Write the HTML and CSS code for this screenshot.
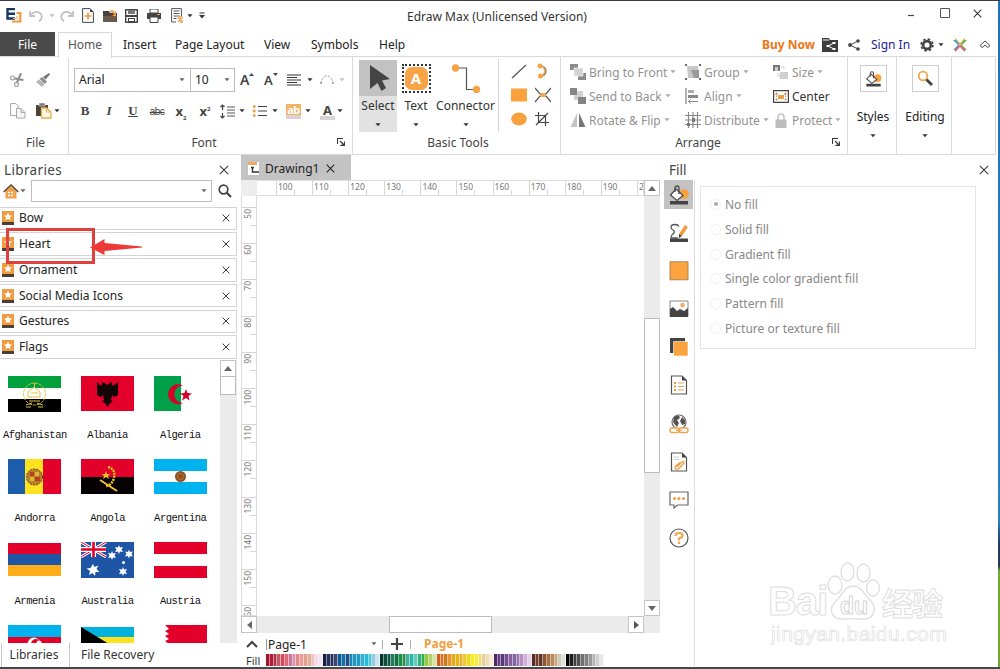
FILE: index.html
```html
<!DOCTYPE html>
<html lang="en">
<head>
<meta charset="utf-8">
<title>Edraw Max</title>
<link rel="stylesheet" href="styles.css">
</head>
<body>
<svg class="sprite" xmlns="http://www.w3.org/2000/svg">
  <symbol id="caret" viewBox="0 0 7 4"><path d="M.5 0h6l-3 3.5z" fill="currentColor"/></symbol>
  <symbol id="close" viewBox="0 0 10 10"><path d="M.8.8l8.4 8.4M9.2.8L.8 9.2" stroke="currentColor" stroke-width="1.2" fill="none"/></symbol>
  <symbol id="launcher" viewBox="0 0 8 8"><path d="M.5 6V.5H6M3 3l4 4M7.4 3.4v4h-4" stroke="#333" stroke-width="1.1" fill="none"/></symbol>
  <symbol id="lib" viewBox="0 0 12 14"><path fill="#f19a3e" d="M0 0h12v11H0z"/><path fill="#4a4038" d="M0 11h12v3H0z"/><path fill="#fff" d="M6 1.6l1.2 2.7 2.9.2-2.2 1.9.7 2.8L6 7.700 3.400 9.200l.7-2.800L1.900 4.500l2.900-.2z"/></symbol>
  <symbol id="undo" viewBox="0 0 14 14"><path d="M1 2v5h5M1.500 6.500C4 2.500 9 1.500 12 5c1.500 3 .5 5.500-2 7.500" stroke="#c2c2c2" stroke-width="1.800" fill="none"/></symbol>
  <symbol id="bucket" viewBox="0 0 20 20"><circle cx="15" cy="9" r="4.800" fill="#f8a13f"/><path d="M7 4l7 6.500-6 5-6.500-5.500z" fill="#fff" stroke="#4a4a4a" stroke-width="1.300"/><path d="M6 7V3q0-2 2-2t2 2v6" fill="none" stroke="#4a4a4a" stroke-width="1.300"/><path fill="#444" d="M1 16h18v3.500H1z"/></symbol>
</svg>

<div class="app">
  <header class="titlebar">
    <div class="qat">
      <svg width="16" height="15" viewBox="0 0 16 15"><path d="M9 1H1.500v9.500H9M2 5.700h7" stroke="#17375e" stroke-width="2.400" fill="none"/><path d="M10.500 5h3.800v8.500H6" stroke="#f0983a" stroke-width="2.200" fill="none"/><path d="M7 10.500h4V8" stroke="#f6b878" stroke-width="1.200" fill="none"/></svg>
      <svg width="14" height="14"><use href="#undo"/></svg>
      <svg class="caret pale" width="6" height="4"><use href="#caret"/></svg>
      <svg class="flip" width="14" height="14"><use href="#undo"/></svg>
      <svg width="12" height="15" viewBox="0 0 12 15"><path d="M.6.6H8l3.400 3.500v10.300H.6z" fill="#fff" stroke="#444"/><path d="M8 .6v3.500h3.400z" fill="#444"/><path d="M6 4.500v7M2.500 8h7" stroke="#f19a3e" stroke-width="1.700"/></svg>
      <svg width="14" height="14" viewBox="0 0 14 14"><path d="M0 2h6l1 2h7v9H0z" fill="#4a423c"/><path d="M0 7h14l-1 6H0z" fill="#6b5b4d"/><path d="M7 2c2-2 4-1 5 2V2h1v5H8l3-1c0-2-2-3-4-2z" fill="#f5a14b"/></svg>
      <svg width="13" height="14" viewBox="0 0 13 14"><path d="M.7.7h11.600v12.600H.7z" fill="#fff" stroke="#444" stroke-width="1.400"/><path d="M3 1h7v4H3z" fill="#777"/><path d="M1 6h11v2H1zM3 9h7v4H3z" fill="#444"/><path d="M4 10h5v2H4z" fill="#fff"/></svg>
      <svg width="14" height="14" viewBox="0 0 14 14"><path d="M3 0h8v4H3z" fill="#fff" stroke="#444"/><path d="M0 4h14v6H0z" fill="#444"/><path d="M3 8h8v5.500H3z" fill="#fff" stroke="#444"/><path d="M10 5h3v1h-3z" fill="#f19a3e"/></svg>
      <svg width="12" height="15" viewBox="0 0 12 15"><path d="M.6 14V.6h9.800v8M.6 14H5" fill="#fff" stroke="#555"/><path d="M2.500 3h6M2.500 5.500h6M2.500 8h6M2.500 10.500h3" stroke="#555"/><path d="M7 9l5 5M7 14l5-5M7 9h3M9 14h3" stroke="#f3a55a" stroke-width="1.500"/></svg>
      <svg class="caret" width="6" height="4"><use href="#caret"/></svg>
      <svg width="6" height="7" viewBox="0 0 6 7"><path d="M.5 1h5" stroke="#333"/><path d="M0 3h6L3 6.500z" fill="#333"/></svg>
    </div>
    <div class="title">Edraw Max (Unlicensed Version)</div>
    <div class="winbtns">
      <svg width="8" height="10" viewBox="0 0 8 10"><path d="M1 7.500h6" stroke="#444" stroke-width="1.200"/></svg>
      <svg width="10" height="10" viewBox="0 0 10 10"><path d="M.5.5h9v9h-9z" stroke="#555" fill="none"/></svg>
      <svg class="caret" width="9" height="9"><use href="#close"/></svg>
    </div>
  </header>

  <nav class="tabs">
    <span class="tab-file">File</span>
    <span class="tab-home">Home</span>
    <div class="tab-list"><span>Insert</span><span>Page Layout</span><span>View</span><span>Symbols</span><span>Help</span></div>
    <div class="account">
      <b class="buy">Buy Now</b>
      <svg width="16" height="14" viewBox="0 0 16 14"><path d="M0 0h7l1 2h8v12H0z" fill="#3d3d3d"/><path d="M1 2h6" stroke="#fff"/><path d="M12 5L6 8l6 3" stroke="#fff" fill="none"/><path d="M10.500 4h3v2h-3zM4.500 7h3v2h-3zM10.500 10h3v2h-3z" fill="#fff"/></svg>
      <svg width="12" height="12" viewBox="0 0 12 12"><path d="M10 2L2 6l8 4" stroke="#444" fill="none"/><circle cx="10" cy="2" r="1.800" fill="#444"/><circle cx="2" cy="6" r="1.900" fill="#444"/><circle cx="10" cy="10" r="1.800" fill="#444"/></svg>
      <span class="signin">Sign In</span>
      <svg width="14" height="14" viewBox="0 0 14 14"><circle cx="7" cy="7" r="3.900" stroke="#444" stroke-width="2.600" fill="none"/><circle cx="7" cy="7" r="5.900" stroke="#444" stroke-width="1.600" fill="none" stroke-dasharray="2.500 2.130"/></svg>
      <svg class="caret" width="6" height="4"><use href="#caret"/></svg>
      <svg width="14" height="14" viewBox="0 0 14 14"><path d="M2 0l5 5 5-5v3L7 7 2 3z" fill="#f5a13a"/><path d="M14 2L9 7l5 5h-3L7.500 7 11 2z" fill="#5cb548"/><path d="M0 2l5 5-5 5h3l3.500-5L3 2z" fill="#35a4d8"/><path d="M2 14l5-5 5 5v-3L7 7l-5 4z" fill="#e35b72"/></svg>
      <svg width="12" height="9" viewBox="0 0 12 9"><path d="M1 5.500L6 1l5 4.500L8.800 7.500 6 5 3.200 7.500z" stroke="#444" fill="#fff"/></svg>
    </div>
  </nav>

  <section class="ribbon">
    <div class="group g-file">
      <div class="file-grid">
        <svg width="16" height="14" viewBox="0 0 16 14"><circle cx="2.500" cy="4.800" r="2" stroke="#aaa" fill="none" stroke-width="1.300"/><circle cx="6.500" cy="11.500" r="2" stroke="#aaa" fill="none" stroke-width="1.300"/><path d="M4.500 5.500l9 1.500M7 9.500L11 0" stroke="#8d8d8d" stroke-width="2"/></svg>
        <svg width="14" height="14" viewBox="0 0 14 14"><path d="M13 0l1 1.500-4.500 5L7 4z" fill="#777"/><path d="M6 4l5 4.500L9 11 3.500 6z" fill="#8f8f8f"/><path d="M3 6.500L8.500 11 6 14 0 9z" fill="#b5b5b5"/></svg>
        <i></i>
        <svg width="16" height="16" viewBox="0 0 16 16"><path d="M.6.600H6l2 2v10H.6z" fill="#fff" stroke="#a5a5a5"/><path d="M6.500 5.500H11l4 4v5.500H6.500z" fill="#f7f7f7" stroke="#aaa"/><path d="M11 5.500v4h4" fill="#ddd" stroke="#aaa"/></svg>
        <svg width="16" height="16" viewBox="0 0 16 16"><path d="M0 2h12v11H0z" fill="#4a433b"/><path d="M3 0h6v3H3z" fill="#777" stroke="#fff" stroke-width=".5"/><path d="M5.500 5h5l4.500 4v6H5.500z" fill="#fff7e8" stroke="#edb04c" stroke-width="1.300"/><path d="M10.500 5v4H15" stroke="#edb04c" fill="none"/></svg>
        <svg class="caret" width="6" height="4"><use href="#caret"/></svg>
      </div>
      <div class="glabel">File</div>
    </div>

    <div class="group g-font">
      <div class="font-top">
        <div class="combo"><span>Arial</span><svg class="caret mid" width="6" height="4"><use href="#caret"/></svg></div>
        <div class="combo size"><span>10</span><svg class="caret mid" width="6" height="4"><use href="#caret"/></svg></div>
        <div class="fsize">A<svg width="5" height="3" viewBox="0 0 5 3"><path d="M0 3h5L2.500 0z" fill="#444"/></svg></div>
        <div class="fsize less">A<svg width="5" height="3" viewBox="0 0 5 3"><path d="M0 0h5L2.500 3z" fill="#444"/></svg></div>
        <svg width="14" height="12" viewBox="0 0 14 12"><path d="M0 1h14M0 3.500h10M0 6h14M0 8.500h10M0 11h14" stroke="#333" stroke-width="1.200"/></svg>
        <svg class="caret" width="6" height="4"><use href="#caret"/></svg>
        <svg width="14" height="10" viewBox="0 0 14 10"><path d="M1 9C2-2 12-2 13 9" stroke="#aaa" fill="none" stroke-dasharray="3 1"/><path d="M0 8h2M12 8h2" stroke="#aaa" stroke-width="2"/></svg>
        <svg class="caret pale" width="6" height="4"><use href="#caret"/></svg>
      </div>
      <div class="font-bot">
        <b>B</b><b><em>I</em></b><b><u>U</u></b><s>abc</s><b class="xs">x<sub>2</sub></b><b class="xs">x<sup>2</sup></b>
        <svg class="spacing" width="15" height="15" viewBox="0 0 15 15"><path d="M2.500 1v5M2.500 9v5M.5 3l2-2 2 2M.5 12l2 2 2-2" stroke="#444" fill="none" stroke-width="1.200"/><path d="M7 3h8M7 6h8M7 9h8M7 12h8" stroke="#555"/></svg>
        <svg class="caret" width="6" height="4"><use href="#caret"/></svg>
        <svg width="14" height="12" viewBox="0 0 14 12"><path d="M0 1.500h2.500M0 6h2.500M0 10.500h2.500" stroke="#f19a3e" stroke-width="2.400"/><path d="M5 1.500h9M5 6h9M5 10.500h9" stroke="#444" stroke-width="1.200"/></svg>
        <svg class="caret" width="6" height="4"><use href="#caret"/></svg>
        <div class="hl">ab</div>
        <svg class="caret" width="6" height="4"><use href="#caret"/></svg>
        <div class="fc">A</div>
        <svg class="caret" width="6" height="4"><use href="#caret"/></svg>
      </div>
      <div class="glabel">Font<svg class="launch" width="8" height="8"><use href="#launcher"/></svg></div>
    </div>

    <div class="group g-basic">
      <div class="basic">
        <div class="big selected"><div class="pic"><svg width="22" height="27" viewBox="0 0 22 27"><path d="M1 0l20 14-8 1.500 4 7.500-4.500 3-4-8L1 24z" fill="#444"/></svg></div><span>Select</span><svg class="caret" width="6" height="4"><use href="#caret"/></svg></div>
        <div class="big"><div class="pic"><div class="textpic"><i>A</i></div></div><span>Text</span><svg class="caret" width="6" height="4"><use href="#caret"/></svg></div>
        <div class="big"><div class="pic"><svg width="30" height="30" viewBox="0 0 30 30"><path d="M5 5h10.500v21.500H25" stroke="#555" stroke-width="1.200" fill="none"/><circle cx="4.500" cy="5" r="3.700" fill="#f7a445"/><circle cx="25.500" cy="26.500" r="3.700" fill="#f7a445"/></svg></div><span>Connector</span><svg class="caret" width="6" height="4"><use href="#caret"/></svg></div>
        <div class="shapes">
          <svg width="16" height="15" viewBox="0 0 16 15"><path d="M1 14L15 1" stroke="#555" stroke-width="1.200"/></svg>
          <svg width="14" height="16" viewBox="0 0 14 16"><path d="M4 3q7 0 7 5t-7 5" stroke="#6a5a48" fill="none" stroke-width="1.200"/><path d="M8 4.500q4 3.500 0 7" stroke="#f7a445" fill="none" stroke-width="1.500"/><circle cx="5" cy="3" r="2.500" fill="#f7a445"/><circle cx="5.500" cy="13" r="2.500" fill="#f7a445"/></svg>
          <svg width="16" height="14" viewBox="0 0 16 14"><path d="M0 .5h16v13H0z" fill="#faa23c"/></svg>
          <svg width="16" height="16" viewBox="0 0 16 16"><path d="M0 1l5 6h6l5-6M0 15l5-6h6l5 6" stroke="#555" fill="none" stroke-width="1.200"/><path d="M5.500 6h5v4h-5z" fill="#f7a445"/></svg>
          <svg width="16" height="14" viewBox="0 0 16 14"><ellipse cx="8" cy="7" rx="7.800" ry="6.500" fill="#f7a03c"/></svg>
          <svg width="14" height="14" viewBox="0 0 14 14"><path d="M3.500 0v10.500H14M0 3.500h10.500V14M1 13L13 1" stroke="#444" fill="none" stroke-width="1.200"/></svg>
        </div>
      </div>
      <div class="glabel">Basic Tools</div>
    </div>

    <div class="group g-arr">
      <div class="arr">
        <div><svg width="16" height="16" viewBox="0 0 16 16"><path d="M0 0h8v6H0zM8 9h8v7H8z" fill="#8c8c8c"/><path d="M4 4h9v8H4z" fill="#d2d2d2" stroke="#fff" stroke-width=".6"/></svg><span>Bring to Front</span><svg class="caret pale2" width="6" height="4"><use href="#caret"/></svg></div>
        <div><svg width="16" height="16" viewBox="0 0 16 16"><path d="M2 2h11l1 12H3z" fill="#c6c6c6"/><path d="M6 6h8v8H9z" fill="#9a9a9a"/><path d="M0 0h2v2H0zM14 0h2v2h-2zM0 14h2v2H0zM14 14h2v2h-2z" fill="#666"/></svg><span>Group</span><svg class="caret pale2" width="6" height="4"><use href="#caret"/></svg></div>
        <div><svg width="16" height="16" viewBox="0 0 16 16"><path d="M0 1h7v6H0z" fill="#777"/><path d="M2 3h3v4H2z" fill="#ccc"/><path d="M7 8h8v7H7z" fill="#d0d0d0"/><path d="M8 3h3v3M5 9v3h3" stroke="#aaa" fill="none" stroke-dasharray="1"/></svg><span>Size</span><svg class="caret pale2" width="6" height="4"><use href="#caret"/></svg></div>
        <div><svg width="16" height="16" viewBox="0 0 16 16"><path d="M4 3h9v9H4z" fill="#d2d2d2"/><path d="M0 0h7v7H0zM8 9h8v7H8z" fill="#858585"/></svg><span>Send to Back</span><svg class="caret pale2" width="6" height="4"><use href="#caret"/></svg></div>
        <div><svg width="14" height="16" viewBox="0 0 14 16"><path d="M1 0v16" stroke="#888" stroke-width="1.300"/><path d="M3 2h6v3H3z" fill="#aaa"/><path d="M3 7h10v3H3z" fill="#888"/><path d="M3 13.500h10M5.500 11.500l-2 2 2 2" stroke="#888" fill="none"/></svg><span>Align</span><svg class="caret pale2" width="6" height="4"><use href="#caret"/></svg></div>
        <div class="on"><svg width="16" height="13" viewBox="0 0 16 13"><path d="M.6.600h14.800v11.800H.6z" fill="#fff" stroke="#444" stroke-width="1.200"/><path d="M5 5h6v4H5z" fill="#f19a3e"/><path d="M3 3h1v2H3zM12 3h1v2h-1zM3 9h1v1H3zM12 9h1v1h-1zM3 6.500h1M12 6.500h1" stroke="#b06c22" stroke-width=".7" fill="none"/></svg><span>Center</span></div>
        <div><svg width="16" height="16" viewBox="0 0 16 16"><path d="M7 1v14H.5z" fill="#c4c4c4"/><path d="M9 1v14h6.500z" fill="#777"/></svg><span>Rotate &amp; Flip</span><svg class="caret pale2" width="6" height="4"><use href="#caret"/></svg></div>
        <div><svg width="16" height="16" viewBox="0 0 16 16"><path d="M0 3.500h16M0 8h16M0 12.500h16M3.500 0v16M8 0v16M12.500 0v16" stroke="#888" stroke-width="1.200"/><path d="M7 6h3v4H7zM2 11h3v3H2z" fill="#777"/></svg><span>Distribute</span><svg class="caret pale2" width="6" height="4"><use href="#caret"/></svg></div>
        <div><svg class="lock" width="12" height="15" viewBox="0 0 12 15"><path d="M3 7V4q0-3 3-3t3 3v3" stroke="#c4c4c4" stroke-width="1.600" fill="none"/><path d="M.5 6.500h11V15H.5z" fill="#bdbdbd"/></svg><span>Protect</span><svg class="caret pale2" width="6" height="4"><use href="#caret"/></svg></div>
      </div>
      <div class="glabel">Arrange<svg class="launch" width="8" height="8"><use href="#launcher"/></svg></div>
    </div>

    <div class="group g-one g-styles"><div class="box"><svg width="17" height="16" viewBox="0 0 20 20"><use href="#bucket"/></svg></div><span>Styles</span><svg class="caret" width="6" height="4"><use href="#caret"/></svg></div>
    <div class="group g-one g-edit"><div class="box"><svg width="17" height="17" viewBox="0 0 17 17"><circle cx="6" cy="6" r="4.300" stroke="#f3a64f" stroke-width="1.800" fill="#fff"/><path d="M9.500 9.500L15 15" stroke="#444" stroke-width="2.800"/></svg></div><span>Editing</span><svg class="caret" width="6" height="4"><use href="#caret"/></svg></div>
  </section>

  <main class="body">
    <aside class="left">
      <div class="left-head"><span>Libraries</span><svg width="10" height="10"><use href="#close"/></svg></div>
      <div class="search">
        <svg width="16" height="15" viewBox="0 0 16 15"><path d="M2.500 7v7.500h11V7L8 2z" fill="#f1a04a"/><path d="M.7 8L8 1l7.300 7" stroke="#5a4636" stroke-width="1.500" fill="none"/><path d="M5 8.500h6M5 11.500h6" stroke="#fff" fill="none" stroke-width="1.500" stroke-dasharray="2 1"/></svg>
        <svg class="caret mid" width="6" height="4"><use href="#caret"/></svg>
        <div class="input"><svg class="caret mid" width="6" height="4"><use href="#caret"/></svg></div>
        <svg width="14" height="14" viewBox="0 0 14 14"><circle cx="5.500" cy="5.500" r="4.300" stroke="#444" stroke-width="1.700" fill="none"/><path d="M8.500 8.500L13 13" stroke="#444" stroke-width="2.200"/></svg>
      </div>
      <div class="libs">
        <div><svg width="12" height="14"><use href="#lib"/></svg><span>Bow</span><svg width="8" height="8"><use href="#close"/></svg></div>
        <div><svg width="12" height="14"><use href="#lib"/></svg><span>Heart</span><svg width="8" height="8"><use href="#close"/></svg></div>
        <div><svg width="12" height="14"><use href="#lib"/></svg><span>Ornament</span><svg width="8" height="8"><use href="#close"/></svg></div>
        <div><svg width="12" height="14"><use href="#lib"/></svg><span>Social Media Icons</span><svg width="8" height="8"><use href="#close"/></svg></div>
        <div><svg width="12" height="14"><use href="#lib"/></svg><span>Gestures</span><svg width="8" height="8"><use href="#close"/></svg></div>
        <div><svg width="12" height="14"><use href="#lib"/></svg><span>Flags</span><svg width="8" height="8"><use href="#close"/></svg></div>
      </div>
      <div class="flags-wrap">
        <div class="flags">
          <figure><svg viewBox="0 0 53 36"><path fill="#00a03c" d="M0 0h53v12H0z"/><path fill="#fff" d="M0 12h53v12H0z"/><path fill="#000" d="M0 23h53v13H0z"/><g fill="none" stroke="#e3c33c"><circle cx="26.500" cy="18" r="11" stroke-dasharray="3 1"/><path d="M20 21v-5l6-5 6 5v5zM18 29l6-2M35 29l-6-2M21 25h11M26.500 7v4M23 17h7M18 31h5M30 31h5"/></g></svg><figcaption>Afghanistan</figcaption></figure>
          <figure><svg viewBox="0 0 53 36"><path fill="#e2002b" d="M0 0h53v35H0z"/><path fill="#140507" d="M22 6l4 3 4-3 2 4 5-4v13l-4 2-2-2-1 5 2 2-3 1-2.500 4-2.500-4-3-1 2-2-1-5-2 2-4-2V6l4 4z"/></svg><figcaption>Albania</figcaption></figure>
          <figure><svg viewBox="0 0 53 36"><path fill="#00a04a" d="M0 0h27v35H0z"/><path d="M29 9.500a10 10 0 1 0 0 17.500 8.500 8.500 0 1 1 0-17.500z" fill="#d6002a"/><path fill="#d6002a" d="M32 13l1.500 4 4.500.5-3.500 2.500 1 4.500-3.500-2.500-4 2.500 1.500-4.500-3.500-2.500 4.500-.5z"/></svg><figcaption>Algeria</figcaption></figure>
          <figure><svg viewBox="0 0 53 36"><path fill="#1d5cab" d="M0 0h17v35H0z"/><path fill="#ffe21f" d="M17 0h18v35H17z"/><path fill="#e2002b" d="M35 0h18v35H35z"/><circle cx="26.500" cy="18" r="8" fill="#b78227" stroke="#5c431c" stroke-dasharray="2 1"/><path fill="#bd3c24" d="M22 13h4v4h-4zM27 18h5v4h-5z"/><path fill="#e3b835" d="M27 13h4v4h-4zM22 18h4v4h-4z"/></svg><figcaption>Andorra</figcaption></figure>
          <figure><svg viewBox="0 0 53 36"><path fill="#e2002b" d="M0 0h53v18H0z"/><path fill="#060203" d="M0 18h53v17H0z"/><path d="M27 8q8 2 6 11-2 7-8 8" stroke="#f5c21d" stroke-width="2.500" fill="none" stroke-dasharray="2 1"/><path d="M19 21l17 11" stroke="#f1c32d" stroke-width="2"/><path fill="#f5c21d" d="M25 12l1 3h3l-2 2 1 3-3-2-3 2 1-3-2-2h3z"/></svg><figcaption>Angola</figcaption></figure>
          <figure><svg viewBox="0 0 53 36"><path fill="#00b2ee" d="M0 0h53v35H0z"/><path fill="#fff" d="M0 12h53v11H0z"/><circle cx="26.500" cy="17.500" r="5.500" fill="#91501f"/><circle cx="26.500" cy="17.500" r="3" fill="none" stroke="#b87533"/></svg><figcaption>Argentina</figcaption></figure>
          <figure><svg viewBox="0 0 53 36"><path fill="#e2002b" d="M0 1h53v11H0z"/><path fill="#1f55a5" d="M0 12h53v11H0z"/><path fill="#ffae1a" d="M0 23h53v11H0z"/></svg><figcaption>Armenia</figcaption></figure>
          <figure><svg viewBox="0 0 53 36"><path fill="#1f55a5" d="M0 0h53v36H0z"/><path d="M0 0l25 15M25 0L0 15" stroke="#fff" stroke-width="3"/><path d="M0 0l25 15M25 0L0 15" stroke="#e2002b"/><path d="M12.500 0v15M0 7.500h25" stroke="#fff" stroke-width="5"/><path d="M12.500 0v15M0 7.500h25" stroke="#e2002b" stroke-width="2.600"/><g fill="#fff"><path d="M12 22l1.500 3 4-1.500-2 3.500 3 3-4 0-.5 4-2.500-3-3.500 2 1-4-3.500-2.500 4-.5z"/><path id="star" d="M38 3l1 2.500 3-.5-1.500 2.500 1.500 2.500-3-.5-1 2.500-1-2.500-3 .5 1.500-2.500L34 5l3 .5z"/><use href="#star" x="-7" y="6"/><use href="#star" x="10" y="4.500"/><use href="#star" x="4" y="22"/><circle cx="42.500" cy="20.500" r="1.500"/></g></svg><figcaption>Australia</figcaption></figure>
          <figure><svg viewBox="0 0 53 36"><path fill="#e2002b" d="M0 0h53v12H0zM0 24h53v12H0z"/></svg><figcaption>Austria</figcaption></figure>
          <figure><svg viewBox="0 0 53 36"><path fill="#00b2ee" d="M0 0h53v12H0z"/><path fill="#e2002b" d="M0 12h53v12H0z"/><path fill="#00a04a" d="M0 24h53v12H0z"/><circle cx="26" cy="19" r="6.500" fill="#fff"/><circle cx="28" cy="19" r="5" fill="#e2002b"/><circle cx="31" cy="18" r="2.500" fill="#fff"/></svg></figure>
          <figure><svg viewBox="0 0 53 36"><path fill="#00b2dc" d="M0 2h53v10H0z"/><path fill="#ffe21f" d="M0 12h53v12H0z"/><path fill="#000" d="M0 2l28 17L0 36z"/></svg></figure>
          <figure><svg viewBox="0 0 53 36"><path fill="#e2002b" d="M11 0h42v36H11l4-2-4-3 4-2-4-3 4-2-4-3 4-2-4-3 4-2-4-3 4-2-4-3 4-2z"/></svg></figure>
        </div>
        <div class="vbar">
          <div class="sbtn"><svg width="8" height="5" viewBox="0 0 8 5"><path d="M0 5h8L4 0z" fill="#666"/></svg></div>
          <div class="thumb"></div>
          <div class="sbtn last"><svg width="8" height="5" viewBox="0 0 8 5"><path d="M0 0h8L4 5z" fill="#666"/></svg></div>
        </div>
      </div>
      <div class="left-tabs"><span class="cur">Libraries</span><span>File Recovery</span></div>
    </aside>

    <section class="center">
      <div class="doc-tab"><svg width="12" height="13" viewBox="0 0 12 13"><path fill="#fff" d="M0 0h11v13H0z"/><path fill="#f2a85c" d="M0 0h9v3H0z"/><path d="M4.500 5v5H11M3 5.500h3" stroke="#333" stroke-width="1.400" fill="none"/></svg><span>Drawing1</span><svg width="9" height="9"><use href="#close"/></svg></div>
      <div class="work">
        <div class="corner"></div>
        <div class="hruler" id="hruler"></div>
        <div class="vruler" id="vruler"></div>
        <div class="canvas"></div>
        <div class="vbar cbar">
          <div class="sbtn"><svg width="8" height="5" viewBox="0 0 8 5"><path d="M0 5h8L4 0z" fill="#666"/></svg></div>
          <div class="thumb"></div>
          <div class="sbtn last"><svg width="8" height="5" viewBox="0 0 8 5"><path d="M0 0h8L4 5z" fill="#666"/></svg></div>
        </div>
        <div class="hbar">
          <div class="sbtn"><svg width="5" height="8" viewBox="0 0 5 8"><path d="M5 0v8L0 4z" fill="#666"/></svg></div>
          <div class="thumb"></div>
          <div class="sbtn last"><svg width="5" height="8" viewBox="0 0 5 8"><path d="M0 0v8l5-4z" fill="#555"/></svg></div>
        </div>
      </div>
      <div class="pages">
        <svg width="12" height="8" viewBox="0 0 12 8"><path d="M1 7l5-5 5 5" stroke="#444" stroke-width="2.200" fill="none"/></svg>
        <span class="pg">Page-1</span>
        <svg class="caret mid" width="6" height="4"><use href="#caret"/></svg>
        <i></i>
        <svg width="12" height="12" viewBox="0 0 12 12"><path d="M6 0v12M0 6h12" stroke="#444" stroke-width="2.200"/></svg>
        <i></i>
        <b>Page-1</b>
      </div>
      <div class="fillrow"><span>Fill</span><div class="palette" id="palette"></div></div>
    </section>

    <section class="right">
      <div class="right-head"><span>Fill</span><svg width="10" height="10"><use href="#close"/></svg></div>
      <div class="right-body">
        <div class="tools">
          <div class="cur"><svg width="20" height="20"><use href="#bucket"/></svg></div>
          <div><svg width="20" height="20" viewBox="0 0 20 20"><path d="M10 3.500Q9 1.500 6 1.500 2 1.500 2 4q0 2 2 3t1 3q-3 2-3 5h7" stroke="#555" fill="none" stroke-width="1.300"/><path d="M16 2l3 2-6 9-3-2z" fill="#f19a3e"/><path d="M10 11l3 2-3 2z" fill="#444"/><path fill="#444" d="M1 15.500h18V19H1z"/></svg></div>
          <div><svg width="20" height="20" viewBox="0 0 20 20"><path d="M1 .800h18v18H1z" fill="#fba33f" stroke="#a98554"/></svg></div>
          <div><svg width="20" height="18" viewBox="0 0 20 18"><path d="M1 1h18v15.500H1z" fill="#fff" stroke="#888"/><path d="M1 9l3-2 4 4 3-2 4 2 4-3v9H1z" fill="#444"/><circle cx="13.500" cy="5" r="2.300" fill="#f4ad60"/></svg></div>
          <div><svg width="20" height="20" viewBox="0 0 20 20"><path fill="#444" d="M1 1h15v15H1z"/><path fill="#fba33f" stroke="#fff" stroke-width=".6" d="M4.500 4.500H19V19H4.500z"/></svg></div>
          <div><svg width="18" height="20" viewBox="0 0 18 20"><path d="M1.500 1H12l4.500 4.500V19h-15z" fill="#fff" stroke="#555" stroke-width="1.200"/><path d="M12 1v4.500h4.500z" fill="#444"/><path d="M4 8h2M4 11.500h2M4 15h2" stroke="#f19a3e" stroke-width="1.800"/><path d="M8 8h6M8 11.500h6M8 15h6" stroke="#e5a359"/></svg></div>
          <div><svg width="20" height="20" viewBox="0 0 20 20"><circle cx="10" cy="8" r="7" fill="#fff" stroke="#666" stroke-width="1.200"/><path d="M5 3q4-3 6 0l-1 2-2 1 2 3-2 4q-3-3-4-5zM13 3l3 3v4l-3 1-2-4z" fill="#555"/><rect x="1" y="14" width="9" height="4.500" rx="2" fill="#fff" stroke="#f0a24c" stroke-width="1.400"/><rect x="10" y="14" width="9" height="4.500" rx="2" fill="#fff" stroke="#f0a24c" stroke-width="1.400"/><path d="M7 16.200h6" stroke="#f0a24c" stroke-width="1.300"/></svg></div>
          <div><svg width="18" height="20" viewBox="0 0 18 20"><path d="M1.500 1H12l4.500 4.500V19h-15z" fill="#fff" stroke="#555" stroke-width="1.200"/><path d="M12 1v4.500h4.500z" fill="#444"/><path d="M4 5h5M4 7.500h5" stroke="#ccc"/><path d="M7 15l5-5q2-1 2 1l-5 5.500q-3 2-4-.5 0-2 2-3l3-2.500" stroke="#f0a04a" stroke-width="1.400" fill="none"/></svg></div>
          <div><svg width="20" height="20" viewBox="0 0 20 20"><path d="M1 2h18v13H8.500l-3.500 3v-3H1z" fill="#fff" stroke="#666" stroke-width="1.200"/><circle cx="5.500" cy="8.500" r="1.500" fill="#f19a3e"/><circle cx="10" cy="8.500" r="1.500" fill="#f19a3e"/><circle cx="14.500" cy="8.500" r="1.500" fill="#f19a3e"/></svg></div>
          <div><svg width="20" height="20" viewBox="0 0 20 20"><circle cx="10" cy="10" r="9" fill="#fff" stroke="#555" stroke-width="1.200"/><path d="M6.500 8q0-3 3.500-3t3.500 2.500q0 2-3.500 3v2M10 13.800v2.200" stroke="#f3a64a" stroke-width="2.200" fill="none"/></svg></div>
        </div>
        <div class="opts-wrap">
          <div class="opts">
            <label class="on"><i></i>No fill</label><label><i></i>Solid fill</label><label><i></i>Gradient fill</label><label><i></i>Single color gradient fill</label><label><i></i>Pattern fill</label><label><i></i>Picture or texture fill</label>
          </div>
        </div>
      </div>
    </section>
  </main>

  <div class="marker"></div>
  <svg class="arrow" width="54" height="18" viewBox="0 0 54 18"><path d="M0 8.500L14.500 0v4L52 7.500v1L14.500 12v4z" fill="#ee3a37"/></svg>
  <div class="watermark">
    <div class="wm-top"><span>Bai</span><svg width="54" height="60" viewBox="0 0 54 60"><g fill="#fff" stroke="#dedede" stroke-width="1.300"><ellipse cx="8" cy="24" rx="7" ry="9"/><ellipse cx="20.500" cy="11" rx="6.500" ry="9"/><ellipse cx="36.500" cy="12" rx="6.500" ry="9"/><ellipse cx="46" cy="27" rx="6.500" ry="8"/><path d="M26 25c9 0 11 9 17 14 8 8 4 19-6 19-6 0-15-1-21 0C4 59 1 47 9 40c6-5 8-15 17-15z"/></g><text x="13" y="53" class="du">du</text></svg><span class="cjk">经验</span></div>
    <div class="wm-url">jingyan.baidu.com</div>
  </div>
  <div class="desk"></div>
</div>
<script src="app.js"></script>
</body>
</html>
```

FILE: styles.css
```css
* { box-sizing: border-box; }
body { margin: 0; background: #fff; font-family: "Noto Sans", "Open Sans", sans-serif; font-size: 12px; color: #333; overflow: hidden; }
svg { display: block; flex: none; }
.sprite { position: absolute; width: 0; height: 0; }
.app { position: relative; width: 1000px; height: 669px; border-top: 1px solid #3c3a3f; border-bottom: 2px solid #48474b; display: flex; flex-direction: column; overflow: hidden; white-space: nowrap; }
.caret { color: #333; }
.caret.mid { color: #666; }
.caret.pale { color: #c0c0c0; }
.caret.pale2 { color: #aaa; }
.flip { transform: scaleX(-1); }

.titlebar { height: 31px; flex: none; display: grid; grid-template-columns: 400px 194px 1fr; align-items: center; }
.qat { display: grid; grid-template-columns: 23px 20px 11px 22px 21px 22px 22px 24px 16px 12px 10px; padding-left: 6px; align-items: center; height: 30px; margin-top: -2px; }
.title { text-align: center; font-size: 12px; letter-spacing: 0; }
.winbtns { display: grid; grid-template-columns: 33px 33px 10px; padding-left: 313px; height: 24px; align-items: center; margin-top: -7px; }

.tabs { height: 24px; flex: none; display: grid; grid-template-columns: 55px 3px 54px 1fr 238px; line-height: 25px; }
.tab-file { background: #4a4a4a; color: #fff; text-align: center; }
.tab-home { grid-column: 3; border: 1px solid #d8d8d8; border-bottom: 0; text-align: center; color: #555; margin-bottom: -1px; background: #fff; z-index: 1; line-height: 24px; }
.tab-list { display: grid; grid-template-columns: 52px 89px 47px 68px 40px; padding-left: 11px; color: #222; }
.account { display: grid; grid-template-columns: 60px 26px 23px 49px 18px 15px 26px 12px; align-items: center; line-height: 22px; }
.buy { color: #ee7614; font-size: 12px; }
.signin { color: #1c1c96; }

.ribbon { height: 99px; flex: none; width: 996px; display: flex; border: 1px solid #d9d9d9; border-left: 0; border-width: 1px 1px 1px 0; }
.group { flex: none; border-right: 1px solid #dadada; display: flex; flex-direction: column; height: 97px; margin: 0; }
.glabel { margin-top: auto; height: 22px; line-height: 22px; text-align: center; color: #444; position: relative; }
.launch { position: absolute; right: 7px; top: 6px; }
.g-file { width: 69px; }
.file-grid { display: grid; grid-template: 31px 31px / 26px 20px 10px; padding: 7px 0 0 10px; align-items: center; }
.file-grid .caret { margin-left: -2px; }
.g-file .glabel { padding-left: 3px; }
.g-font { width: 284px; }
.font-top { display: grid; grid-template-columns: 117px 49px 24px 23px 20px 13px 19px 6px; padding: 11px 0 0 5px; align-items: center; height: 35px; }
.combo { height: 24px; border: 1px solid #bcbcbc; display: flex; align-items: center; justify-content: space-between; padding: 0 5px 0 4px; color: #222; line-height: 20px; }
.combo span { margin-top: -1px; }
.combo.size { width: 45px; margin-left: -1px; padding-right: 4px; }
.fsize { display: flex; font-weight: 600; font-size: 14px; line-height: 20px; color: #444; align-items: flex-start; }
.fsize svg { margin: 3px 0 0 0; }
.fsize.less { font-size: 13px; }
.font-bot { display: grid; grid-template-columns: 24px 24px 24px 24px 24px 24px 22px 14px 19px 14px 19px 15px 17px 6px; padding-left: 4px; margin-top: 7px; height: 24px; align-items: center; color: #444; }
.font-bot b, .font-bot s { text-align: center; font-family: "Liberation Serif", serif; font-size: 13px; }
.font-bot s { font-family: "Liberation Sans", sans-serif; font-size: 10px; letter-spacing: -.5px; }
.font-bot .xs { font-family: "Noto Sans", sans-serif; font-size: 13px; line-height: 14px; }
.font-bot sub, .font-bot sup { font-size: 6px; line-height: 0; }
.spacing { margin-left: 3px; }
.hl { width: 15px; height: 15px; background: #f3b266; color: #fff; font-size: 11px; font-weight: bold; line-height: 11px; text-align: center; border-bottom: 4px solid #ddd0d2; letter-spacing: -.5px; }
.fc { width: 15px; height: 17px; line-height: 14px; font-size: 13px; font-weight: bold; text-align: center; border-bottom: 4px solid #d8d3d5; }
.g-font .glabel { padding-right: 13px; }
.g-basic { width: 208px; }
.basic { display: grid; grid-template-columns: 38px 38px 63px 1fr; padding: 3px 0 0 6px; }
.big { display: flex; flex-direction: column; align-items: center; height: 72px; }
.big .pic { width: 38px; height: 36px; display: flex; align-items: center; justify-content: center; flex: none; }
.big span { line-height: 18px; margin: 1px 0 8px; }
.big:nth-child(3) { width: 61px; }
.selected { background: #e2e2e2; }
.selected .pic { background: #c2c2c2; }
.selected .pic svg { margin-left: 4px; }
.textpic { width: 29px; height: 29px; border: 2px dotted #333; padding: 1px; }
.textpic i { display: block; height: 23px; border-radius: 7px; background: #f8a346; color: #fff; font: bold 15px/23px "Noto Sans", sans-serif; text-align: center; }
.shapes { border-left: 1px solid #d4d4d4; display: grid; grid-template: 24px 24px 24px / 24px 24px; padding-left: 12px; align-items: center; margin-top: -1px; }
.g-basic .glabel { padding-left: 3px; }
.g-arr { width: 287px; }
.arr { display: grid; grid-template: 24px 24px 24px / 115px 88px 1fr; padding: 3px 0 0 9px; color: #929292; }
.arr div { display: grid; grid-template-columns: 19px auto 6px; justify-content: start; align-items: center; column-gap: 0; }
.arr .caret { margin-left: 3px; }
.arr .on { color: #333; }
.lock { margin-left: 2px; }
.g-arr .glabel { padding-right: 12px; }
.g-one { align-items: center; color: #222; padding-left: 2px; }
.g-styles { width: 49px; }
.g-edit { width: 55px; }
.box { width: 27px; height: 27px; border: 1px solid #cecece; display: flex; align-items: center; justify-content: center; margin: 8px 0 15px; }
.g-one span { line-height: 18px; margin-bottom: 8px; margin-top: 1px; }
.g-one > .caret { flex: none; }

.body { flex: 1; display: grid; grid-template-columns: 241px 419px 1fr; min-height: 0; }
.left { display: grid; grid-template-rows: 25px 26px 153px 1fr 24px; width: 237px; min-height: 0; }
.left-head { display: flex; justify-content: space-between; align-items: center; padding: 4px 8px 0 4px; font-size: 13.500px; letter-spacing: .35px; }
.search { display: grid; grid-template-columns: 17px 11px 187px 14px; padding-left: 3px; align-items: center; height: 22px; }
.input { width: 181px; height: 22px; border: 1px solid #bdbdbd; display: flex; align-items: center; justify-content: flex-end; padding-right: 4px; }
.libs { display: grid; grid-template-rows: repeat(6, 23.500px); gap: 2.300px; align-content: start; padding-top: .5px; }
.libs div { display: grid; grid-template-columns: 17px 1fr 8px; align-items: center; border: 1px solid #d5d5d5; border-left: 0; padding: 0 6px 0 2px; color: #222; line-height: 20px; }
.libs svg:last-child { color: #333; }
.flags-wrap { display: grid; grid-template-columns: 220px 17px; min-height: 0; overflow: hidden; }
.flags { display: grid; grid-template: repeat(4, 83px) / repeat(3, 72.700px); padding-top: 17px; align-content: start; }
figure { margin: 0; display: flex; flex-direction: column; align-items: center; }
figure svg { width: 53px; height: 36px; margin-right: 3px; }
figcaption { font-family: "Liberation Mono", monospace; font-size: 10.500px; letter-spacing: -.5px; color: #111; margin-top: 16px; line-height: 14px; margin-right: 3px; }
.vbar { background: #ebebeb; display: flex; flex-direction: column; margin-top: 1px; }
.sbtn { width: 16px; height: 16px; flex: none; border: 1px solid #c4c4c4; background: #fff; display: flex; align-items: center; justify-content: center; }
.thumb { background: #fff; border: 1px solid #bcbcbc; }
.last { margin-top: auto; }
.flags-wrap .thumb { height: 19px; margin-top: -1px; width: 16px; }
.flags-wrap .sbtn { height: 17px; }
.left-tabs { display: grid; grid-template-columns: 69px 1fr; padding: 0 0 1px 1px; line-height: 24px; color: #333; }
.left-tabs .cur { border: 1px solid #c8c8c8; border-top: 0; text-align: center; padding-right: 3px; }
.left-tabs span:last-child { padding-left: 11px; }

.center { display: grid; grid-template-rows: 25px 453px 21px 1fr; min-height: 0; }
.doc-tab { width: 110px; background: #c3c3c3; display: grid; grid-template-columns: 17px 61px 9px; padding: 1px 0 0 7px; align-items: center; color: #222; }
.work { display: grid; grid-template: 16px 420px 17px / 16px 387px 16px; min-height: 0; }
.corner { background: #ededed; }
.hruler { border: 1px solid #ddd; border-left: 0; display: flex; overflow: hidden; padding-left: 19px; }
.hruler span { flex: none; width: 36.100px; border-left: 1px solid #d5d5d5; font-size: 8.500px; line-height: 11px; padding-left: 1px; color: #777; background: linear-gradient(#d5d5d5, #d5d5d5) 17px 100% / 1px 5px no-repeat; }
.vruler { border: 1px solid #ddd; border-top: 0; overflow: hidden; padding-top: 11px; }
.vruler span { display: block; height: 36.200px; border-top: 1px solid #d5d5d5; width: 14px; background: linear-gradient(#d5d5d5, #d5d5d5) 100% 17px / 6px 1px no-repeat; }
.vruler em { display: block; width: 11px; height: fit-content; font-style: normal; font-size: 8.500px; line-height: 11px; writing-mode: vertical-rl; transform: rotate(180deg); color: #777; padding-bottom: 1px; }
.cbar { grid-column: 3; grid-row: 1 / 3; margin: 0; }
.cbar .thumb { height: 155px; margin-top: 122px; }
.hbar { grid-column: 1 / 4; background: #ebebeb; display: flex; width: 419px; padding-right: 16px; }
.hbar .sbtn { height: 17px; }
.hbar .thumb { width: 103px; margin-left: 132px; }
.hbar .last { margin: 0 0 0 auto; }
.pages { display: grid; grid-template-columns: 20px 105px 11px 9px 19px 14px auto; padding: 1px 0 0 5px; align-items: center; line-height: 20px; color: #222; }
.pages i { width: 1px; height: 9px; background: #aaa; }
.pages .pg { border-left: 1px solid #999; line-height: 11px; padding-left: 1px; }
.pages b { color: #f1a03d; }
.fillrow { display: grid; grid-template-columns: 20px 340px; padding-left: 5px; line-height: 13px; font-size: 11px; overflow: hidden; }
.palette { display: flex; height: 12px; padding-top: 0; }
.palette i { flex: none; width: 3.800px; border-right: 1px solid rgba(255,255,255,.5); }

.right { display: flex; flex-direction: column; width: 338px; padding-left: 4px; }
.right-head { height: 25px; display: flex; justify-content: space-between; align-items: center; padding: 4px 9px 0 5px; font-size: 13.500px; }
.right-head, .left-head { color: #444; }
.right-body { flex: 1; display: grid; grid-template-columns: 31px 1fr; }
.tools { border-right: 1px solid #ddd; display: grid; grid-template-rows: repeat(10, 38.200px); }
.tools div { width: 29px; height: 29px; display: flex; align-items: center; justify-content: center; }
.tools .cur { background: #c3c3c3; }
.opts-wrap { padding: 6px 0 0 5px; }
.opts { width: 276px; height: 163px; border: 1px solid #e4e4e4; padding: 5px 0 0 9px; display: grid; grid-template-rows: repeat(6, 24.850px); color: #888; }
.opts label { display: grid; grid-template-columns: 15px 1fr; align-items: center; }
.opts i { width: 11px; height: 11px; border-radius: 50%; border: 1px solid #f0f0f0; display: grid; place-items: center; }
.opts .on i::after { content: ""; width: 4px; height: 4px; border-radius: 50%; background: #aaa; }

.marker { position: absolute; left: 6px; top: 227px; width: 89px; height: 36px; border: 3px solid #e0413f; }
.arrow { position: absolute; left: 90px; top: 238px; }
.watermark { position: absolute; left: 768px; top: 560px; color: #fff; -webkit-text-stroke: 1px #dedede; font-family: "Liberation Sans", sans-serif; }
.wm-top { display: grid; grid-template-columns: 59px 55px auto; align-items: end; height: 60px; }
.wm-top span { font-weight: bold; font-size: 40px; line-height: 40px; letter-spacing: -1px; }
.wm-top .cjk { font-family: "Noto Sans CJK SC", sans-serif; font-size: 31px; line-height: 38px; }
.du { font: bold 23px "Liberation Sans", sans-serif; fill: #fff; stroke: #d5d5d5; stroke-width: 1px; -webkit-text-stroke: 0; }
.wm-url { font-size: 21px; letter-spacing: .4px; line-height: 26px; -webkit-text-stroke-width: .7px; padding-left: 3px; }
.desk { position: absolute; right: 0; top: 0; width: 2px; height: 667px; background: linear-gradient(#1d73b5 0, #2a80bd 520px, #1f3f68 540px, #24384a 565px, #6dab2e 570px, #6fa533 100%); }
```

FILE: app.js
```js
// Ruler labels: one segment for every ten units.
const hr = document.getElementById('hruler');
for (let v = 100; v <= 200; v += 10) {
  const s = document.createElement('span');
  s.textContent = v;
  hr.append(s);
}
const vr = document.getElementById('vruler');
for (let v = 50; v <= 160; v += 10) {
  const s = document.createElement('span');
  const e = document.createElement('em');
  e.textContent = v;
  s.append(e);
  vr.append(s);
}

// Quick colour swatches, grouped by hue.
const swatches = [
  'a0142e b01e3a a83848 c25a6c d84a5c e06a74 c878a0 dc90b0 e08a8a f09c94 e4a08c dcb09a f0c4c4 f2dcea f4e4f2',
  '141c44 20305c 2c2c60 38486c 0a5c94 1870a8 284c84 1488b8 2496c0 1c9cc8 3cacd0 20bcd8 48c8d8 9cc8e0 cce4f0',
  '04382c 0c4c3c 085844 28785c 0c7440 189048 388854 40b0a0 28b8a8 6cc8b8 30b47c 38ac48 98c83c b8d070 d4e4a4',
  'cc5c20 d87428 c87c1c e89428 dcac20 e4b418 e8b030 f0c830 e8d820 f8ec20 f4ec48 f0dc78 e4d0a0 f0dcb8 f8ecd4',
  '4c2864 643880 583878 745090 8c5c9c 7c68a0 a070b0 b890c0 d0b0d4 e4d0e4',
  '582c20 743c28 603828 8c5830 a87040 b48c60 c8a878 c8ccbc e0e0d4',
  '000000 202020 404040 505050 707070 808080 989898 b4b4b4 d0d0d0 e8e8e8'
].join(' ').split(' ');
const palette = document.getElementById('palette');
for (const c of swatches) {
  const i = document.createElement('i');
  i.style.background = '#' + c;
  palette.append(i);
}
```
